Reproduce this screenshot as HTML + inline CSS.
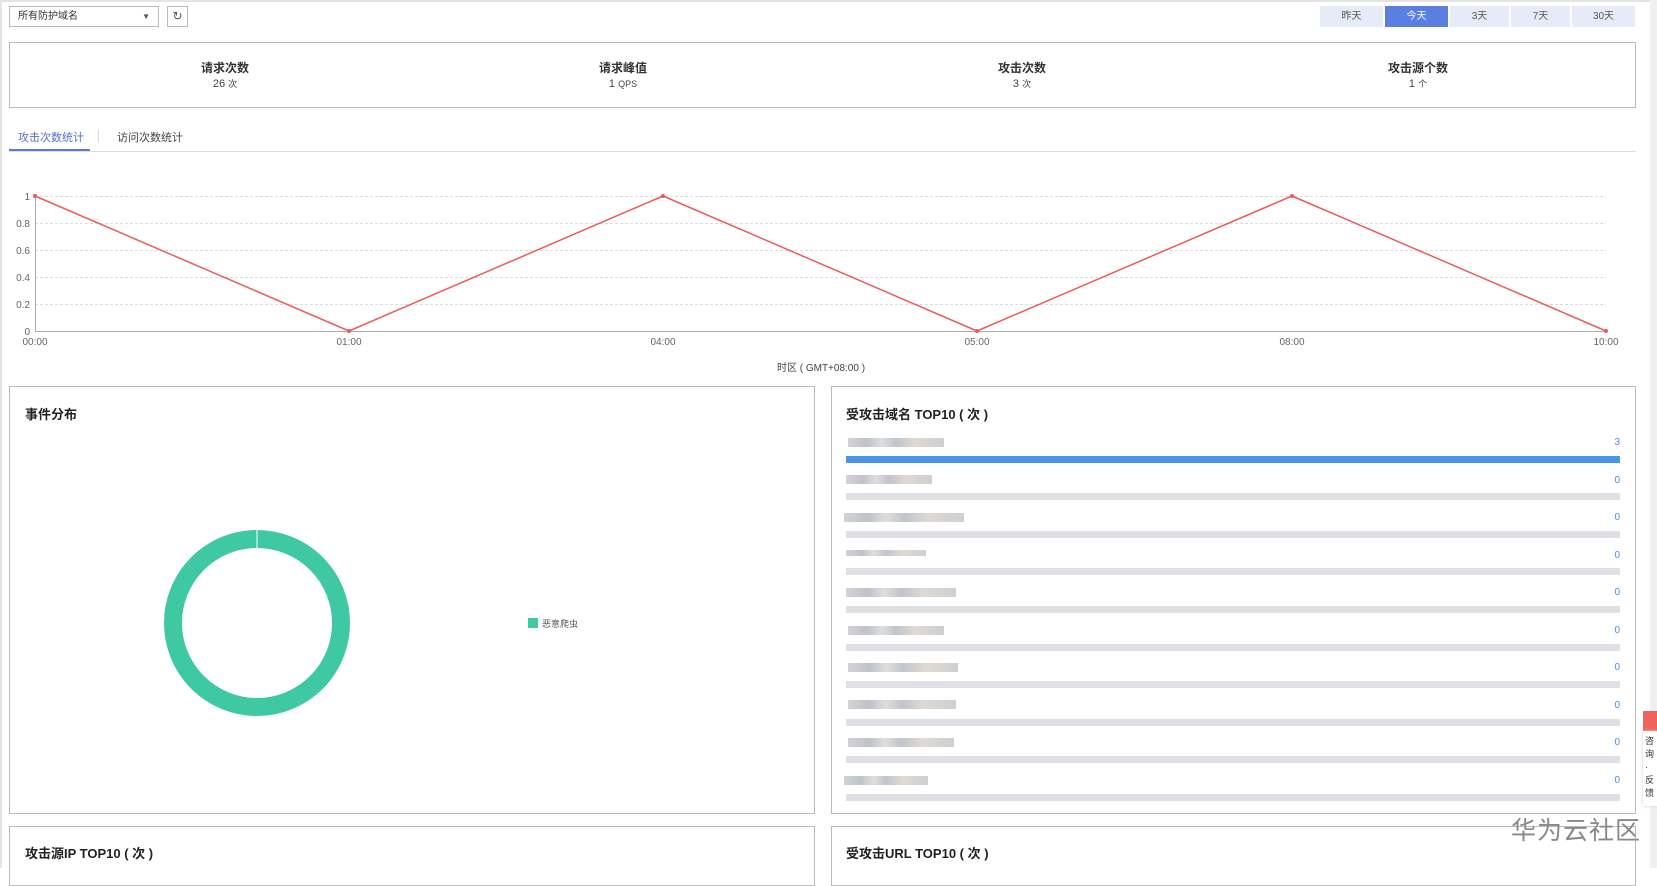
<!DOCTYPE html>
<html><head><meta charset="utf-8"><style>
*{box-sizing:border-box;margin:0;padding:0}
body{width:1657px;height:868px;overflow:hidden;background:#fff;font-family:"Liberation Sans","Noto Sans CJK SC",sans-serif;font-size:12px;color:#333;position:relative}
.abs{position:absolute}
.btn{position:absolute;top:6px;height:21px;background:#e6ecf7;color:#555;font-size:10px;text-align:center;line-height:21px}
.box{position:absolute;border:1px solid #bbb;background:#fff}
.stat{position:absolute;top:16px;width:200px;text-align:center}
.stat b{display:block;font-size:12px;color:#333}
.stat span{font-size:11px;color:#444}
.stat small{font-size:9px}
.ttl{position:absolute;font-weight:bold;font-size:13px;color:#222}
.bar{position:absolute;left:846px;width:774px;height:7px;background:#dfe0e4}
.num{position:absolute;right:37px;font-size:10px;color:#4a90e2}
.blur{position:absolute;height:9px;background:linear-gradient(90deg,#c8c8cc,#aeb4bc 20%,#d6d6d6 35%,#b0b6c0 50%,#d8d0c8 70%,#bfc3c8);opacity:.8}
</style></head><body>
<div class="abs" style="left:0;top:0;width:1650px;height:2px;background:#e4e4e4"></div>
<div class="abs" style="left:0;top:0;width:2px;height:868px;background:#e4e4e4"></div>
<div class="abs" style="left:1650px;top:0;width:7px;height:868px;background:#f0f0f0"></div>

<div class="abs" style="left:9px;top:6px;width:150px;height:21px;border:1px solid #bbb;font-size:10px;line-height:19px;padding-left:8px;color:#333">所有防护域名<span style="position:absolute;right:8px;top:0;font-size:8px;color:#555">▼</span></div>
<div class="abs" style="left:167px;top:6px;width:21px;height:21px;border:1px solid #bbb;text-align:center;line-height:19px;font-size:12px;color:#555">↻</div>

<div class="btn" style="left:1320px;width:63px">昨天</div>
<div class="btn" style="left:1385px;width:63px;background:#5b7fe0;color:#fff">今天</div>
<div class="btn" style="left:1450px;width:59px">3天</div>
<div class="btn" style="left:1511px;width:59px">7天</div>
<div class="btn" style="left:1572px;width:63px">30天</div>

<div class="box" style="left:9px;top:42px;width:1627px;height:66px">
<div class="stat" style="left:115px"><b>请求次数</b><span>26 <small>次</small></span></div>
<div class="stat" style="left:513px"><b>请求峰值</b><span>1 <small>QPS</small></span></div>
<div class="stat" style="left:912px"><b>攻击次数</b><span>3 <small>次</small></span></div>
<div class="stat" style="left:1308px"><b>攻击源个数</b><span>1 <small>个</small></span></div>
</div>

<div class="abs" style="left:18px;top:129px;color:#5470c6;font-size:11px">攻击次数统计</div>
<div class="abs" style="left:98px;top:130px;width:1px;height:12px;background:#ddd"></div>
<div class="abs" style="left:117px;top:129px;color:#444;font-size:11px">访问次数统计</div>
<div class="abs" style="left:9px;top:151px;width:1627px;height:1px;background:#ddd"></div>
<div class="abs" style="left:9px;top:149px;width:81px;height:2px;background:#5b7bd5"></div>

<svg class="abs" style="left:0;top:0" width="1657" height="380">
<g stroke="#d8dce6" stroke-dasharray="3,2" stroke-width="1">
<line x1="35" y1="196.5" x2="1606" y2="196.5"/><line x1="35" y1="223.5" x2="1606" y2="223.5"/>
<line x1="35" y1="250.5" x2="1606" y2="250.5"/><line x1="35" y1="277.5" x2="1606" y2="277.5"/>
<line x1="35" y1="304.5" x2="1606" y2="304.5"/></g>
<line x1="35.5" y1="196" x2="35.5" y2="331" stroke="#aaa"/>
<line x1="35" y1="331.5" x2="1606" y2="331.5" stroke="#aaa"/>
<g font-size="10" fill="#666" text-anchor="end" font-family="Liberation Sans">
<text x="30" y="200">1</text><text x="30" y="227">0.8</text><text x="30" y="254">0.6</text><text x="30" y="281">0.4</text><text x="30" y="308">0.2</text><text x="30" y="335">0</text></g>
<g font-size="10" fill="#666" text-anchor="middle" font-family="Liberation Sans">
<text x="35" y="345">00:00</text><text x="349" y="345">01:00</text><text x="663" y="345">04:00</text><text x="977" y="345">05:00</text><text x="1292" y="345">08:00</text><text x="1606" y="345">10:00</text></g>
<polyline points="35,196 349,331 663,196 977,331 1292,196 1606,331" fill="none" stroke="#ee5a5a" stroke-width="1.5"/>
<g fill="#ee5a5a"><circle cx="35" cy="196" r="2"/><circle cx="349" cy="331" r="2"/><circle cx="663" cy="196" r="2"/><circle cx="977" cy="331" r="2"/><circle cx="1292" cy="196" r="2"/><circle cx="1606" cy="331" r="2"/></g>
<text x="821" y="371" font-size="10" fill="#444" text-anchor="middle" font-family="Liberation Sans,Noto Sans CJK SC">时区 ( GMT+08:00 )</text>
</svg>

<div class="box" style="left:9px;top:386px;width:806px;height:428px"></div>
<div class="ttl" style="left:25px;top:404px">事件分布</div>
<svg class="abs" style="left:0;top:380px" width="815" height="430">
<circle cx="257" cy="243" r="84" fill="none" stroke="#3ec9a4" stroke-width="18"/>
<line x1="257" y1="150" x2="257" y2="169" stroke="#fff" stroke-width="1"/>
<rect x="528" y="238" width="10" height="10" fill="#3ec9a4"/>
<text x="542" y="247" font-size="9" fill="#555" font-family="Liberation Sans,Noto Sans CJK SC">恶意爬虫</text>
</svg>

<div class="box" style="left:831px;top:386px;width:805px;height:428px"></div>
<div class="ttl" style="left:846px;top:404px">受攻击域名 TOP10 ( 次 )</div>
<div class="blur" style="left:848px;top:438px;width:96px"></div>
<div class="bar" style="top:456px;background:#4a95e8"></div><div class="num" style="top:437px">3</div>
<div class="blur" style="left:846px;top:475px;width:86px"></div>
<div class="bar" style="top:493px"></div><div class="num" style="top:475px">0</div>
<div class="blur" style="left:844px;top:513px;width:120px"></div>
<div class="bar" style="top:531px"></div><div class="num" style="top:512px">0</div>
<div class="blur" style="left:846px;top:550px;width:80px;height:6px"></div>
<div class="bar" style="top:568px"></div><div class="num" style="top:550px">0</div>
<div class="blur" style="left:846px;top:588px;width:110px"></div>
<div class="bar" style="top:606px"></div><div class="num" style="top:587px">0</div>
<div class="blur" style="left:848px;top:626px;width:96px"></div>
<div class="bar" style="top:644px"></div><div class="num" style="top:625px">0</div>
<div class="blur" style="left:848px;top:663px;width:110px"></div>
<div class="bar" style="top:681px"></div><div class="num" style="top:662px">0</div>
<div class="blur" style="left:848px;top:700px;width:108px"></div>
<div class="bar" style="top:719px"></div><div class="num" style="top:700px">0</div>
<div class="blur" style="left:848px;top:738px;width:106px"></div>
<div class="bar" style="top:756px"></div><div class="num" style="top:737px">0</div>
<div class="blur" style="left:844px;top:776px;width:84px"></div>
<div class="bar" style="top:794px"></div><div class="num" style="top:775px">0</div>

<div class="box" style="left:9px;top:826px;width:806px;height:60px"></div>
<div class="ttl" style="left:25px;top:843px">攻击源IP TOP10 ( 次 )</div>
<div class="box" style="left:831px;top:826px;width:805px;height:60px"></div>
<div class="ttl" style="left:846px;top:843px">受攻击URL TOP10 ( 次 )</div>

<div class="abs" style="left:1511px;top:811px;font-size:25px;color:#888;font-family:'Noto Sans CJK SC',sans-serif;letter-spacing:1px">华为云社区</div>

<div class="abs" style="left:1643px;top:711px;width:14px;height:20px;background:#f0625c"></div>
<div class="abs" style="left:1643px;top:731px;width:14px;height:75px;background:#fff;box-shadow:0 0 3px #ccc;font-size:9px;line-height:13px;padding-left:2px;padding-top:4px;color:#333">咨<br>询<br>·<br>反<br>馈</div>
</body></html>
